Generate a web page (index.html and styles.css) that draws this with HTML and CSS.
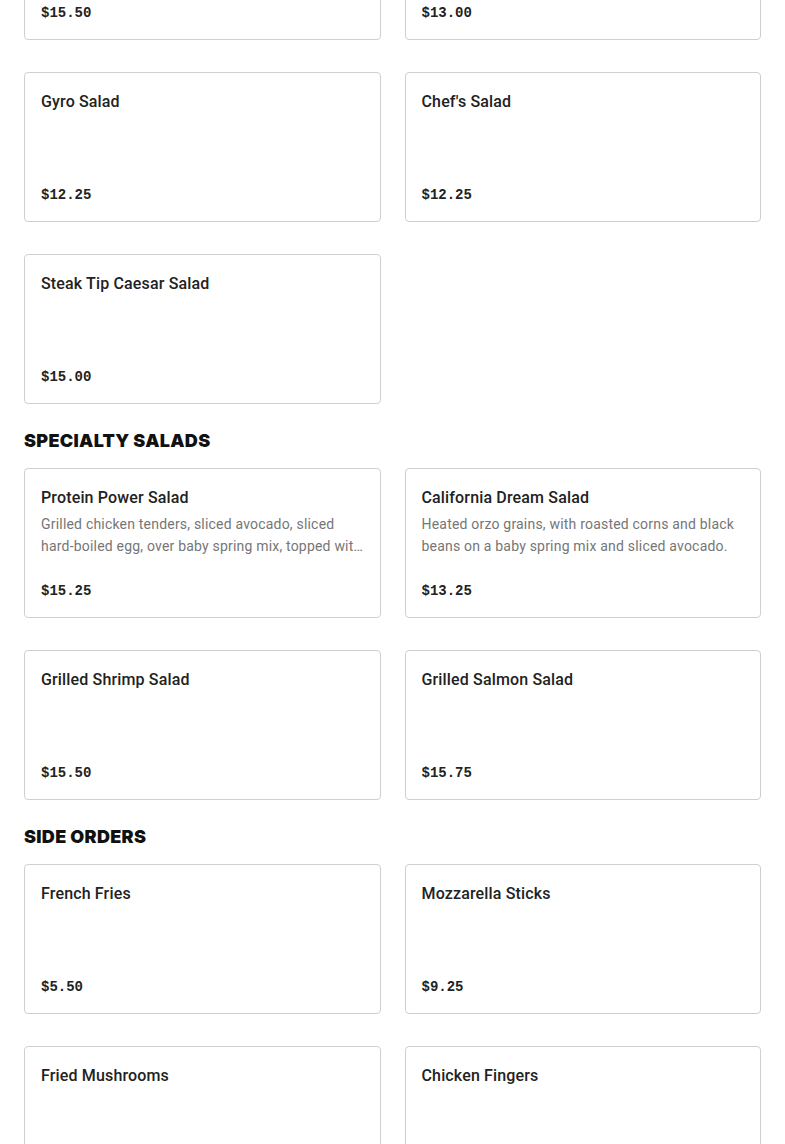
FILE: index.html
```html
<!DOCTYPE html>
<html>
<head>
<meta charset="utf-8">
<link rel="stylesheet" href="styles.css">
</head>
<body>
<main class="menu">
  <section class="section">
    <div class="grid">
      <div class="card"><h3 class="name">Greek Salad</h3><div class="price">$15.50</div></div>
      <div class="card"><h3 class="name">Garden Salad</h3><div class="price">$13.00</div></div>
      <div class="card"><h3 class="name">Gyro Salad</h3><div class="price">$12.25</div></div>
      <div class="card"><h3 class="name">Chef's Salad</h3><div class="price">$12.25</div></div>
      <div class="card"><h3 class="name">Steak Tip Caesar Salad</h3><div class="price">$15.00</div></div>
    </div>
  </section>
  <section class="section">
    <h2 class="heading">SPECIALTY SALADS</h2>
    <div class="grid">
      <div class="card"><h3 class="name">Protein Power Salad</h3><p class="desc">Grilled chicken tenders, sliced avocado, sliced hard&#8209;boiled egg, over baby spring mix, topped with feta cheese and cherry tomatoes.</p><div class="price">$15.25</div></div>
      <div class="card"><h3 class="name">California Dream Salad</h3><p class="desc">Heated orzo grains, with roasted corns and black beans on a baby spring mix and sliced avocado.</p><div class="price">$13.25</div></div>
      <div class="card"><h3 class="name">Grilled Shrimp Salad</h3><div class="price">$15.50</div></div>
      <div class="card"><h3 class="name">Grilled Salmon Salad</h3><div class="price">$15.75</div></div>
    </div>
  </section>
  <section class="section">
    <h2 class="heading">SIDE ORDERS</h2>
    <div class="grid">
      <div class="card"><h3 class="name">French Fries</h3><div class="price">$5.50</div></div>
      <div class="card"><h3 class="name">Mozzarella Sticks</h3><div class="price">$9.25</div></div>
      <div class="card"><h3 class="name">Fried Mushrooms</h3><div class="price">$8.25</div></div>
      <div class="card"><h3 class="name">Chicken Fingers</h3><div class="price">$10.25</div></div>
    </div>
  </section>
</main>
</body>
</html>
```
FILE: styles.css
```css
html, body { margin: 0; padding: 0; background: #fff; }
body { font-family: Roboto, "Liberation Sans", sans-serif; color: #222; overflow: hidden; }
.menu { padding: 0 24px; margin-top: -110px; }
.section { margin-bottom: 24px; }
.heading {
  margin: 0 0 15px;
  padding-top: 1px;
  font-family: Inter, "Liberation Sans", sans-serif;
  font-size: 18px;
  line-height: 24px;
  font-weight: 900;
  color: #111;
  letter-spacing: 0.3px;
}
.grid { display: grid; grid-template-columns: 1fr 1fr; column-gap: 24px; row-gap: 32px; }
.card {
  box-sizing: border-box;
  height: 150px;
  border: 1px solid #cfcfcf;
  border-radius: 4px;
  padding: 17px 16px 15px;
  display: flex;
  flex-direction: column;
}
.name { margin: 0; font-size: 16px; line-height: 24px; font-weight: 500; color: #222; letter-spacing: 0.15px; }
.desc {
  margin: 3px 0 0;
  font-size: 14px;
  line-height: 22px;
  color: #767676;
  letter-spacing: 0.2px;
  display: -webkit-box;
  -webkit-line-clamp: 2;
  -webkit-box-orient: vertical;
  overflow: hidden;
}
.price {
  margin-top: auto;
  font-family: "Liberation Mono", monospace;
  font-size: 14px;
  line-height: 21px;
  font-weight: 700;
  color: #222;
}
```
